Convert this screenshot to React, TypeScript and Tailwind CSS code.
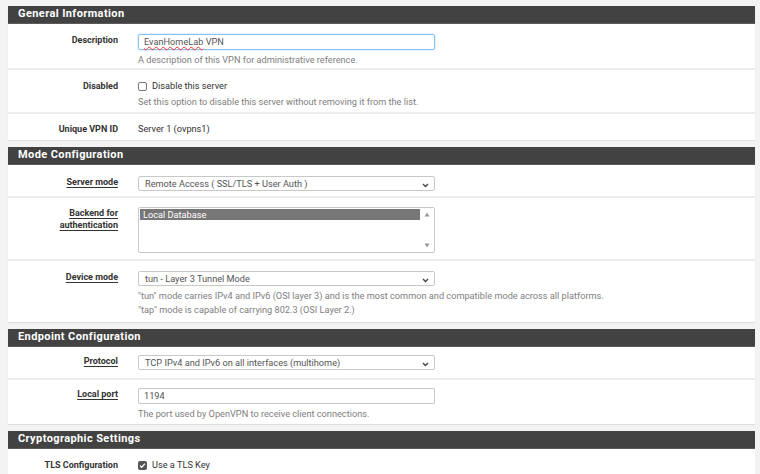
import type { ReactNode } from 'react';

const font = { fontFamily: 'Roboto, "Liberation Sans", sans-serif' };

function Heading({ title }: { title: string }) {
  return (
    <div className="h-[18px] bg-[#424242] border-b border-[#5a5a5a] pl-[10px] flex items-center text-[11px] font-bold text-white tracking-[0.4px]">
      {title}
    </div>
  );
}

function Row({ label, underline, h, pt = 10, last, children }: { label: ReactNode; underline?: boolean; h: number; pt?: number; last?: boolean; children: ReactNode }) {
  return (
    <div className={`flex ${last ? '' : 'border-b-2 border-[#ececec]'}`} style={{ height: h, paddingTop: pt }}>
      <div className={`w-[110px] shrink-0 text-right text-[9px] leading-[12px] font-bold text-[#333] ${underline ? 'underline underline-offset-2' : ''}`}>
        {label}
      </div>
      <div className="ml-[20px] w-[297px] text-[9.2px] leading-[12px]">{children}</div>
    </div>
  );
}

function Chevron() {
  return (
    <svg width="7" height="5" viewBox="0 0 7 5" className="absolute right-[5px] top-[6px]">
      <path d="M1 1l2.5 2.5L6 1" fill="none" stroke="#444" strokeWidth="1.4" />
    </svg>
  );
}

function Select({ value }: { value: string }) {
  return (
    <div className="relative h-[15px] border border-[#c8c8c8] rounded-[2px] bg-white pl-[6px] flex items-center text-[#555]">
      {value}
      <Chevron />
    </div>
  );
}

function Help({ children }: { children: ReactNode }) {
  return <div className="text-[#808080] mt-[4px] whitespace-nowrap">{children}</div>;
}

function Checkbox({ checked }: { checked?: boolean }) {
  return checked ? (
    <div className="w-[9px] h-[9px] rounded-[2px] bg-[#555] flex items-center justify-center">
      <svg width="7" height="7" viewBox="0 0 7 7"><path d="M1 3.6l1.7 1.7L6 1.6" fill="none" stroke="#fff" strokeWidth="1.3" /></svg>
    </div>
  ) : (
    <div className="w-[9px] h-[9px] rounded-[2px] border border-[#777] bg-white" />
  );
}

export default function App() {
  return (
    <div className="min-h-[474px] w-[760px] bg-[#f3f3f3] pt-[6px] overflow-hidden" style={font}>
      <div className="ml-[8px] w-[747px] space-y-[7px]">
        {/* General */}
        <div className="bg-white shadow-[0_1px_1px_rgba(0,0,0,0.08)]">
          <Heading title="General Information" />
          <Row label="Description" h={46}>
            <div className="h-[16px] border border-[#8dc1f2] rounded-[2px] shadow-[0_0_2px_#9cc9f5] pl-[5px] flex items-center text-[#555]">
              <span className="underline decoration-wavy decoration-[#e33] decoration-1 underline-offset-1">EvanHomeLab</span>&nbsp;VPN
            </div>
            <Help>A description of this VPN for administrative reference.</Help>
          </Row>
          <Row label="Disabled" h={44} pt={10}>
            <div className="flex items-center gap-[5px] text-[#333] h-[12px]">
              <Checkbox />
              <span>Disable this server</span>
            </div>
            <Help>Set this option to disable this server without removing it from the list.</Help>
          </Row>
          <Row label="Unique VPN ID" h={26} pt={9} last>
            <div className="text-[#333]">Server 1 (ovpns1)</div>
          </Row>
        </div>

        {/* Mode */}
        <div className="bg-white shadow-[0_1px_1px_rgba(0,0,0,0.08)]">
          <Heading title="Mode Configuration" />
          <Row label="Server mode" underline h={33} pt={11}>
            <Select value="Remote Access ( SSL/TLS + User Auth )" />
          </Row>
          <Row label={<>Backend for<br />authentication</>} underline h={63} pt={9}>
            <div className="relative h-[46px] border border-[#c8c8c8] rounded-[2px] bg-white p-[1px] pr-[14px]">
              <div className="h-[11px] bg-[#777] text-white leading-[11px] pl-[3px]">Local Database</div>
              <svg width="6" height="5" viewBox="0 0 6 5" className="absolute right-[4px] top-[4px]"><path d="M3 0.5L5.5 4.5H0.5z" fill="#999" /></svg>
              <svg width="6" height="5" viewBox="0 0 6 5" className="absolute right-[4px] bottom-[4px]"><path d="M3 4.5L5.5 0.5H0.5z" fill="#999" /></svg>
            </div>
          </Row>
          <Row label="Device mode" underline h={61} pt={10} last>
            <Select value="tun - Layer 3 Tunnel Mode" />
            <Help>"tun" mode carries IPv4 and IPv6 (OSI layer 3) and is the most common and compatible mode across all platforms.</Help>
            <div className="text-[#808080] mt-[2px] whitespace-nowrap">"tap" mode is capable of carrying 802.3 (OSI Layer 2.)</div>
          </Row>
        </div>

        {/* Endpoint */}
        <div className="bg-white shadow-[0_1px_1px_rgba(0,0,0,0.08)]">
          <Heading title="Endpoint Configuration" />
          <Row label="Protocol" underline h={33} pt={8}>
            <Select value="TCP IPv4 and IPv6 on all interfaces (multihome)" />
          </Row>
          <Row label="Local port" underline h={44} pt={8} last>
            <div className="h-[16px] border border-[#c8c8c8] rounded-[2px] pl-[5px] flex items-center text-[#555]">1194</div>
            <Help>The port used by OpenVPN to receive client connections.</Help>
          </Row>
        </div>

        {/* Crypto */}
        <div className="bg-white">
          <Heading title="Cryptographic Settings" />
          <Row label="TLS Configuration" h={40} pt={10} last>
            <div className="flex items-center gap-[5px] text-[#333] h-[12px]">
              <Checkbox checked />
              <span>Use a TLS Key</span>
            </div>
          </Row>
        </div>
      </div>
    </div>
  );
}
